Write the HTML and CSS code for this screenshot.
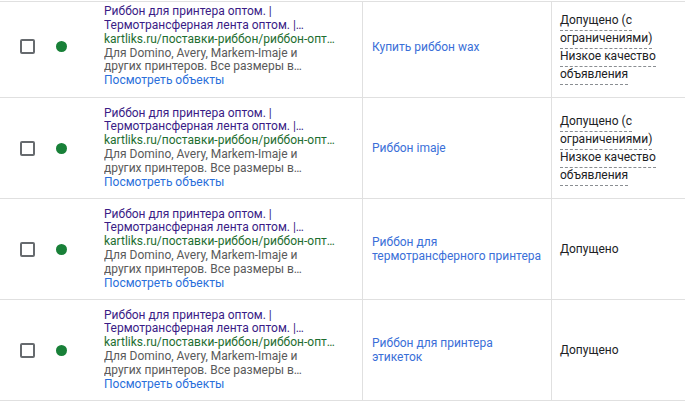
FILE: index.html
```html
<!DOCTYPE html>
<html lang="ru">
<head>
<meta charset="utf-8">
<link rel="stylesheet" href="styles.css">
</head>
<body>
<div class="table">
  <div class="row first">
    <div class="cell c-check"><span class="checkbox"></span></div>
    <div class="cell c-dot"><span class="dot"></span></div>
    <div class="cell c-ad">
      <span class="line head">Риббон для принтера оптом. |</span>
      <span class="line head">Термотрансферная лента оптом. |…</span>
      <span class="line url">kartliks.ru/поставки-риббон/риббон-опт…</span>
      <span class="line desc">Для Domino, Avery, Markem-Imaje и</span>
      <span class="line desc">других принтеров. Все размеры в…</span>
      <span class="line more">Посмотреть объекты</span>
    </div>
    <div class="cell c-kw"><span class="kw">Купить риббон wax</span></div>
    <div class="cell c-status">
      <span class="st-line"><span class="dashed">Допущено (с ограничениями)</span></span>
      <span class="st-line"><span class="dashed">Низкое качество объявления</span></span>
    </div>
  </div>
  <div class="row">
    <div class="cell c-check"><span class="checkbox"></span></div>
    <div class="cell c-dot"><span class="dot"></span></div>
    <div class="cell c-ad">
      <span class="line head">Риббон для принтера оптом. |</span>
      <span class="line head">Термотрансферная лента оптом. |…</span>
      <span class="line url">kartliks.ru/поставки-риббон/риббон-опт…</span>
      <span class="line desc">Для Domino, Avery, Markem-Imaje и</span>
      <span class="line desc">других принтеров. Все размеры в…</span>
      <span class="line more">Посмотреть объекты</span>
    </div>
    <div class="cell c-kw"><span class="kw">Риббон imaje</span></div>
    <div class="cell c-status">
      <span class="st-line"><span class="dashed">Допущено (с ограничениями)</span></span>
      <span class="st-line"><span class="dashed">Низкое качество объявления</span></span>
    </div>
  </div>
  <div class="row">
    <div class="cell c-check"><span class="checkbox"></span></div>
    <div class="cell c-dot"><span class="dot"></span></div>
    <div class="cell c-ad">
      <span class="line head">Риббон для принтера оптом. |</span>
      <span class="line head">Термотрансферная лента оптом. |…</span>
      <span class="line url">kartliks.ru/поставки-риббон/риббон-опт…</span>
      <span class="line desc">Для Domino, Avery, Markem-Imaje и</span>
      <span class="line desc">других принтеров. Все размеры в…</span>
      <span class="line more">Посмотреть объекты</span>
    </div>
    <div class="cell c-kw"><span class="kw">Риббон для термотрансферного принтера</span></div>
    <div class="cell c-status"><span class="plain">Допущено</span></div>
  </div>
  <div class="row">
    <div class="cell c-check"><span class="checkbox"></span></div>
    <div class="cell c-dot"><span class="dot"></span></div>
    <div class="cell c-ad">
      <span class="line head">Риббон для принтера оптом. |</span>
      <span class="line head">Термотрансферная лента оптом. |…</span>
      <span class="line url">kartliks.ru/поставки-риббон/риббон-опт…</span>
      <span class="line desc">Для Domino, Avery, Markem-Imaje и</span>
      <span class="line desc">других принтеров. Все размеры в…</span>
      <span class="line more">Посмотреть объекты</span>
    </div>
    <div class="cell c-kw"><span class="kw">Риббон для принтера этикеток</span></div>
    <div class="cell c-status"><span class="plain">Допущено</span></div>
  </div>
</div>
</body>
</html>
```
FILE: styles.css
```css
* { box-sizing: border-box; }
html, body {
  margin: 0;
  padding: 0;
  background: #ffffff;
}
body {
  font-family: Roboto, "Noto Sans", Arial, sans-serif;
  font-size: 12px;
  color: #202124;
  overflow: hidden;
}
.table {
  margin-top: 1px;
  border-top: 1px solid #e0e0e0;
  width: 685px;
}
.row {
  display: grid;
  grid-template-columns: 50px 54px 258px 189px 134px;
  height: 101px;
  border-bottom: 1px solid #e0e0e0;
}
.row.first {
  height: 96px;
}
.cell {
  display: flex;
  align-items: center;
  min-width: 0;
}
.row.first .cell {
  padding-bottom: 6px;
}
.c-check {
  padding-left: 20px;
}
.checkbox {
  display: block;
  width: 15px;
  height: 15px;
  border: 2px solid #666a6e;
  border-radius: 2px;
}
.c-dot {
  padding-left: 6px;
}
.dot {
  display: block;
  width: 11px;
  height: 11px;
  border-radius: 50%;
  background: #188038;
}
.c-ad {
  flex-direction: column;
  align-items: stretch;
  justify-content: center;
  padding-right: 20px;
  line-height: 13.8px;
}
.line {
  display: block;
  white-space: nowrap;
  overflow: hidden;
}
.head { color: #3a1c86; }
.url { color: #1e6e30; }
.desc { color: #5a5a5a; }
.more { color: #2a6fdb; }
.c-kw {
  border-left: 1px solid #e0e0e0;
  padding-left: 9px;
  padding-right: 10px;
  line-height: 14px;
}
.kw { color: #3a6fd8; }
.c-status {
  border-left: 1px solid #e0e0e0;
  padding-left: 8px;
  padding-right: 14px;
  flex-direction: column;
  align-items: flex-start;
  justify-content: center;
  line-height: 18px;
}
.st-line { display: block; }
.dashed {
  padding-bottom: 3px;
  border-bottom: 1px dashed #8a8e92;
}
.plain { color: #202124; }
```
